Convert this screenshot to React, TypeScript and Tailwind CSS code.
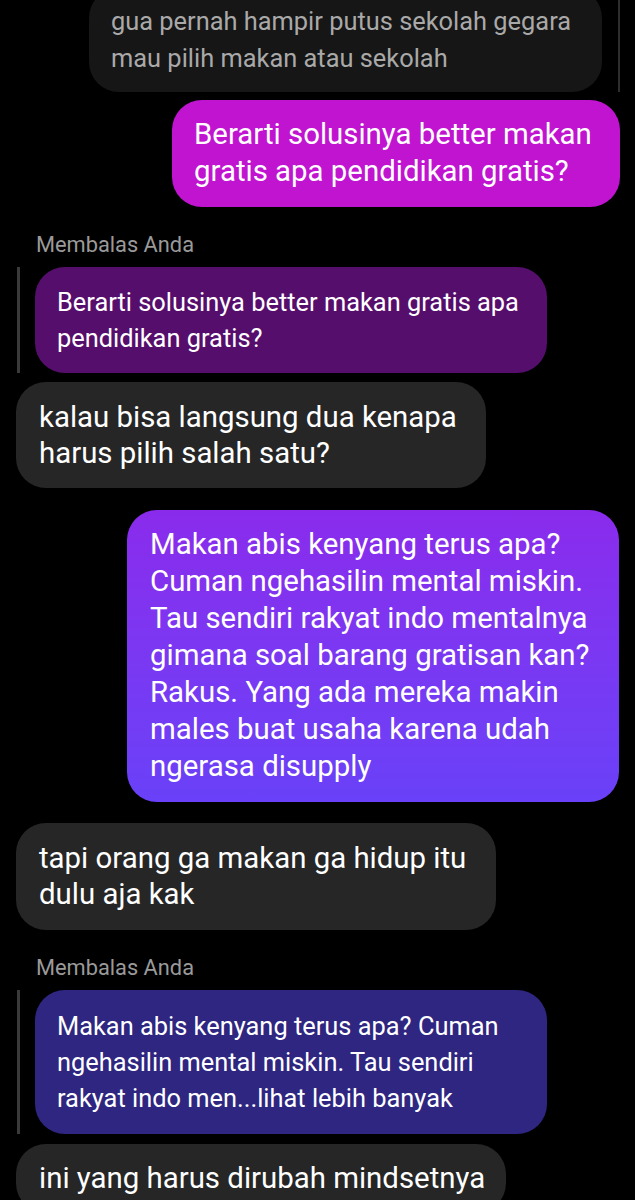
import React from 'react';

const font = { fontFamily: 'Roboto, "Noto Sans", sans-serif' };

const Lines: React.FC<{ lines: string[] }> = ({ lines }) => (
  <>
    {lines.map((l, i) => (
      <div key={i} className="whitespace-nowrap">
        {l}
      </div>
    ))}
  </>
);

const ReplyLabel: React.FC = () => (
  <div className="ml-[36px] text-[21.8px] leading-[24px] text-[#9a9a9a]">Membalas Anda</div>
);

const App: React.FC = () => {
  return (
    <div className="w-[635px] h-[1200px] overflow-hidden bg-black" style={font}>
      {/* first (faded) incoming message, cut off at the top */}
      <div className="flex -mt-[12px]">
        <div className="ml-[89px] w-[513px] rounded-[30px] bg-[#161616] pl-[22px] pt-[15px] pb-[15px] text-[25.4px] leading-[37px] text-[#a9a9a9]">
          <Lines lines={['gua pernah hampir putus sekolah gegara', 'mau pilih makan atau sekolah']} />
        </div>
        <div className="ml-[16px] mt-[12px] w-[2px] h-[92px] bg-[#2e2e2e]" />
      </div>

      {/* outgoing magenta */}
      <div className="flex justify-end pr-[15px] mt-[8px]">
        <div className="w-[448px] rounded-[30px] bg-[#c014d0] pl-[22px] pt-[16px] pb-[17px] text-[29.4px] leading-[37px] text-white">
          <Lines lines={['Berarti solusinya better makan', 'gratis apa pendidikan gratis?']} />
        </div>
      </div>

      <div className="mt-[26px]">
        <ReplyLabel />
      </div>

      {/* quoted reply */}
      <div className="flex mt-[10px]">
        <div className="ml-[17px] w-[3px] bg-[#3a3a3a]" />
        <div className="ml-[15px] w-[512px] rounded-[30px] bg-[#560e6c] pl-[22px] py-[17px] text-[25.4px] leading-[36px] text-white">
          <Lines lines={['Berarti solusinya better makan gratis apa', 'pendidikan gratis?']} />
        </div>
      </div>

      <div className="ml-[16px] mt-[9px] w-[470px] rounded-[30px] bg-[#262626] pl-[23px] pt-[17px] pb-[17px] text-[29.4px] leading-[36px] text-white">
        <Lines lines={['kalau bisa langsung dua kenapa', 'harus pilih salah satu?']} />
      </div>

      {/* outgoing gradient */}
      <div className="flex justify-end pr-[16px] mt-[22px]">
        <div className="w-[492px] rounded-[30px] bg-gradient-to-b from-[#8a2bec] to-[#6941f8] pl-[23px] pt-[16px] pb-[17px] text-[29.4px] leading-[37px] text-white">
          <Lines
            lines={[
              'Makan abis kenyang terus apa?',
              'Cuman ngehasilin mental miskin.',
              'Tau sendiri rakyat indo mentalnya',
              'gimana soal barang gratisan kan?',
              'Rakus. Yang ada mereka makin',
              'males buat usaha karena udah',
              'ngerasa disupply',
            ]}
          />
        </div>
      </div>

      <div className="ml-[16px] mt-[21px] w-[480px] rounded-[30px] bg-[#262626] pl-[23px] pt-[17px] pb-[18px] text-[29.4px] leading-[36px] text-white">
        <Lines lines={['tapi orang ga makan ga hidup itu', 'dulu aja kak']} />
      </div>

      <div className="mt-[26px]">
        <ReplyLabel />
      </div>

      <div className="flex mt-[10px]">
        <div className="ml-[17px] w-[3px] bg-[#3a3a3a]" />
        <div className="ml-[15px] w-[512px] rounded-[30px] bg-[#2e2680] pl-[22px] py-[18px] text-[25.4px] leading-[36px] text-white">
          <Lines
            lines={[
              'Makan abis kenyang terus apa? Cuman',
              'ngehasilin mental miskin. Tau sendiri',
              'rakyat indo men...lihat lebih banyak',
            ]}
          />
        </div>
      </div>

      <div className="ml-[16px] mt-[10px] w-[490px] rounded-[30px] bg-[#262626] pl-[23px] pt-[16px] pb-[17px] text-[29.4px] leading-[36px] text-white">
        <Lines lines={['ini yang harus dirubah mindsetnya']} />
      </div>
    </div>
  );
};

export default App;
